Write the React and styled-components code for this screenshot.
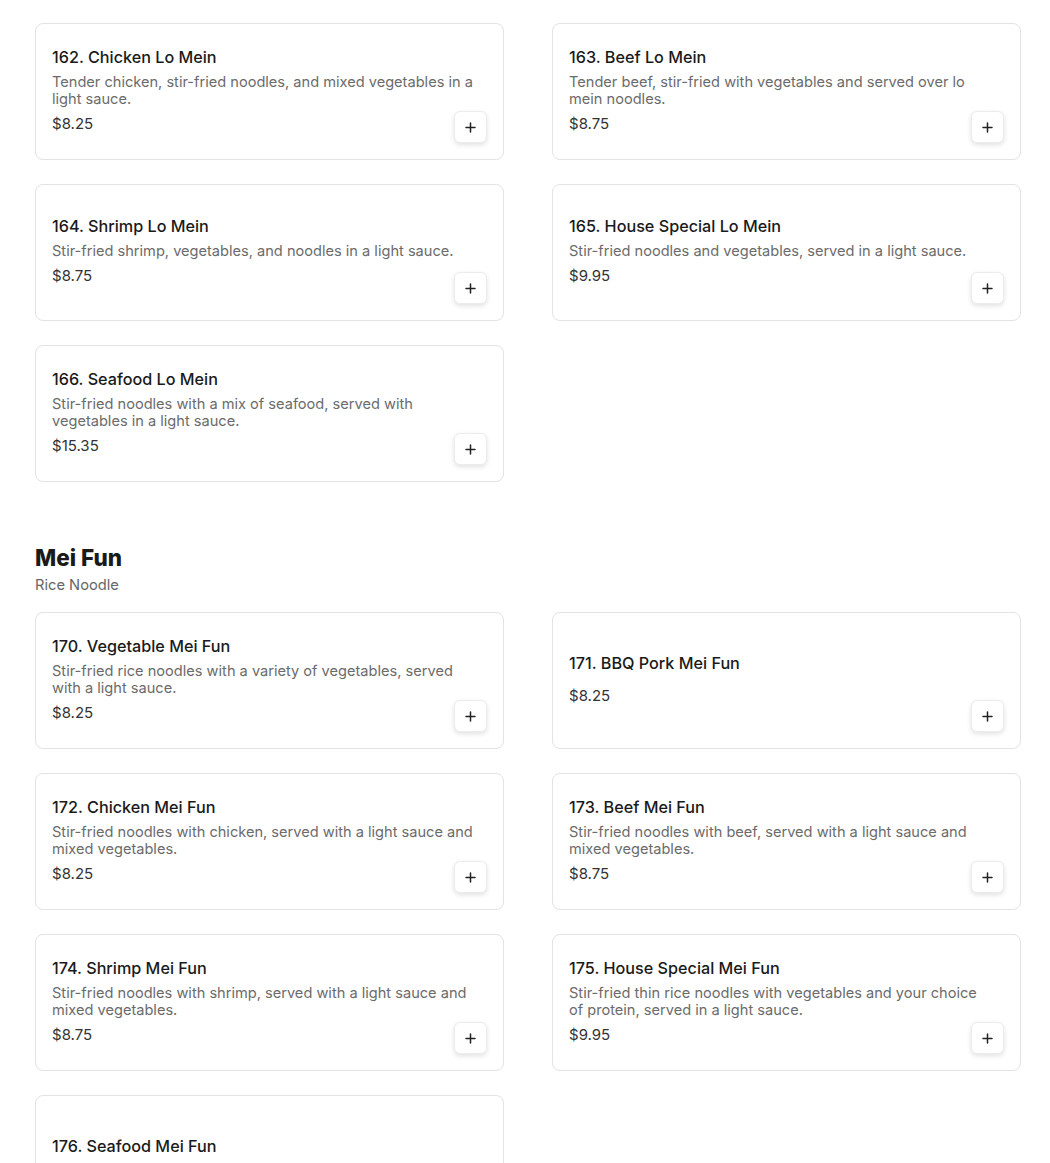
import React from 'react';
import styled, { createGlobalStyle } from 'styled-components';

const GlobalStyle = createGlobalStyle`
  html, body {
    margin: 0;
    padding: 0;
    background: #fff;
    font-family: Inter, "Noto Sans", "Liberation Sans", sans-serif;
    color: #1a1a1a;
    overflow: hidden;
  }
`;

const sections = [
  {
    id: 'lomein',
    items: [
      { n: 160, name: 'Vegetable Lo Mein', desc: 'Stir-fried noodles with mixed vegetables in a light sauce.', price: '7.95' },
      { n: 161, name: 'BBQ Pork Lo Mein', desc: 'Stir-fried noodles with roast pork and vegetables.', price: '8.25' },
      { n: 162, name: 'Chicken Lo Mein', desc: 'Tender chicken, stir-fried noodles, and mixed vegetables in a light sauce.', price: '8.25' },
      { n: 163, name: 'Beef Lo Mein', desc: 'Tender beef, stir-fried with vegetables and served over lo mein noodles.', price: '8.75' },
      { n: 164, name: 'Shrimp Lo Mein', desc: 'Stir-fried shrimp, vegetables, and noodles in a light sauce.', price: '8.75' },
      { n: 165, name: 'House Special Lo Mein', desc: 'Stir-fried noodles and vegetables, served in a light sauce.', price: '9.95' },
      { n: 166, name: 'Seafood Lo Mein', desc: 'Stir-fried noodles with a mix of seafood, served with vegetables in a light sauce.', price: '15.35' },
    ],
  },
  {
    id: 'meifun',
    title: 'Mei Fun',
    subtitle: 'Rice Noodle',
    items: [
      { n: 170, name: 'Vegetable Mei Fun', desc: 'Stir-fried rice noodles with a variety of vegetables, served with a light sauce.', price: '8.25' },
      { n: 171, name: 'BBQ Pork Mei Fun', desc: '', price: '8.25' },
      { n: 172, name: 'Chicken Mei Fun', desc: 'Stir-fried noodles with chicken, served with a light sauce and mixed vegetables.', price: '8.25' },
      { n: 173, name: 'Beef Mei Fun', desc: 'Stir-fried noodles with beef, served with a light sauce and mixed vegetables.', price: '8.75' },
      { n: 174, name: 'Shrimp Mei Fun', desc: 'Stir-fried noodles with shrimp, served with a light sauce and mixed vegetables.', price: '8.75' },
      { n: 175, name: 'House Special Mei Fun', desc: 'Stir-fried thin rice noodles with vegetables and your choice of protein, served in a light sauce.', price: '9.95' },
      { n: 176, name: 'Seafood Mei Fun', desc: '', price: '15.35' },
    ],
  },
];

// page is scrolled: the previous row of cards sits just above the viewport
const Page = styled.main`
  padding: 0 30px 40px 35px;
  margin-top: -138px;
`;

const Section = styled.section`
  & + & {
    margin-top: 61px;
  }
`;

const SectionTitle = styled.h2`
  margin: 0;
  font-size: 22.5px;
  line-height: 30px;
  font-weight: 800;
  color: #1a1a1a;
`;

const SectionSub = styled.p`
  margin: 4px 0 18px;
  font-size: 14.7px;
  line-height: 17px;
  color: #666;
`;

const Grid = styled.div`
  display: grid;
  grid-template-columns: 469px 469px;
  column-gap: 48px;
  row-gap: 24px;
`;

const Card = styled.article`
  box-sizing: border-box;
  height: 137px;
  border: 1px solid #e3e3e3;
  border-radius: 8px;
  background: #fff;
  padding: 16px;
  display: grid;
  grid-template-areas: 'stack';
  & > * {
    grid-area: stack;
  }
`;

const Info = styled.div`
  align-self: center;
  display: flex;
  flex-direction: column;
  gap: 6px;
  padding: 0 11px 4px 0;
`;

const Name = styled.h3`
  margin: 0;
  font-size: 16.2px;
  line-height: 22px;
  font-weight: 500;
  color: #1a1a1a;
`;

const Desc = styled.p`
  margin: 0;
  font-size: 14.6px;
  line-height: 17px;
  color: #6b6b6b;
`;

const Price = styled.span`
  font-size: 15px;
  line-height: 20px;
  color: #333;
`;

const AddButton = styled.button`
  align-self: end;
  justify-self: end;
  width: 33px;
  height: 32px;
  padding: 0;
  border: 1px solid #ececec;
  border-radius: 6px;
  background: #fff;
  box-shadow: 0 2px 5px rgba(0, 0, 0, 0.12);
  display: flex;
  align-items: center;
  justify-content: center;
  color: #222;
  cursor: pointer;
`;

const PlusIcon = () => (
  <svg width="11" height="11" viewBox="0 0 11 11" fill="none">
    <path d="M5.5 1v9M1 5.5h9" stroke="currentColor" strokeWidth="1.5" strokeLinecap="round" />
  </svg>
);

const MenuCard = ({ item }) => (
  <Card>
    <Info>
      <Name>{item.n}. {item.name}</Name>
      <Desc>{item.desc}</Desc>
      <Price>${item.price}</Price>
    </Info>
    <AddButton aria-label={`Add ${item.name}`}>
      <PlusIcon />
    </AddButton>
  </Card>
);

const App = () => (
  <>
    <GlobalStyle />
    <Page>
      {sections.map((s) => (
        <Section key={s.id}>
          {s.title && <SectionTitle>{s.title}</SectionTitle>}
          {s.subtitle && <SectionSub>{s.subtitle}</SectionSub>}
          <Grid>
            {s.items.map((it) => (
              <MenuCard key={it.n} item={it} />
            ))}
          </Grid>
        </Section>
      ))}
    </Page>
  </>
);

export default App;
